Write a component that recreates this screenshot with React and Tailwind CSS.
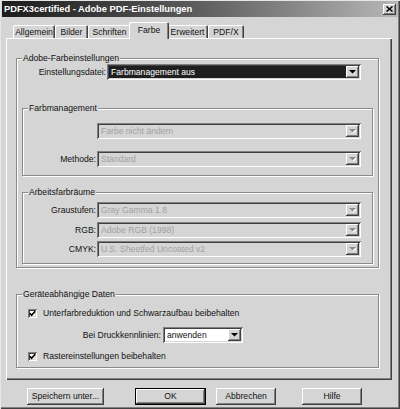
import React from "react";

const raised =
  "shadow-[inset_-1px_-1px_0_#404040,inset_1px_1px_0_#fff,inset_-2px_-2px_0_#808080]";
const sunken =
  "shadow-[inset_1px_1px_0_#808080,inset_-1px_-1px_0_#fff,inset_2px_2px_0_#404040,inset_-2px_-2px_0_#d5d5d5]";

function Tri({ disabled }) {
  return (
    <svg width="7" height="5" viewBox="0 0 7 5">
      {disabled ? (
        <>
          <path d="M1 1 L8 1 L4.5 4.5 Z" fill="#fff" />
          <path d="M0 0 L7 0 L3.5 3.5 Z" fill="#8c8c8c" />
        </>
      ) : (
        <path d="M0 0 L7 0 L3.5 3.5 Z" fill="#000" />
      )}
    </svg>
  );
}

function DropBtn({ disabled }) {
  return (
    <div className={`flex h-[12px] w-[13px] shrink-0 items-center justify-center bg-[#d5d5d5] ${raised}`}>
      <Tri disabled={disabled} />
    </div>
  );
}

function SelectDark({ text }) {
  return (
    <div className={`flex h-[16px] w-[254px] items-center p-[2px] bg-[#d5d5d5] ${sunken}`}>
      <div className="flex h-full flex-1 items-center bg-[#1f1f1f] pl-[2px] text-white">{text}</div>
      <DropBtn />
    </div>
  );
}

function SelectDisabled({ text }) {
  return (
    <div className={`flex h-[16px] w-[264px] items-center p-[2px] bg-[#d5d5d5] ${sunken}`}>
      <div className="flex h-full flex-1 items-center pl-[2px] text-[#a2a2a2]">{text}</div>
      <DropBtn disabled />
    </div>
  );
}

function SelectWhite({ text }) {
  return (
    <div className={`flex h-[16px] w-[80px] items-center p-[2px] bg-white ${sunken}`}>
      <div className="flex h-full flex-1 items-center pl-[2px] text-[#111]">{text}</div>
      <DropBtn />
    </div>
  );
}

function Group({ label, className, children }) {
  return (
    <div
      className={`relative border border-[#8a8a8a] shadow-[1px_1px_0_#fff,inset_1px_1px_0_#fff] ${className}`}
    >
      <div className="absolute left-[5px] top-[-6px] bg-[#d5d5d5] px-[1px] leading-[11px] text-[#111]">
        {label}
      </div>
      {children}
    </div>
  );
}

function Row({ label, labelW, disabled, children, className }) {
  return (
    <div className={`flex items-center ${className}`}>
      <div className={`${labelW} pr-[1px] text-right ${disabled ? "text-[#111]" : "text-[#111]"}`}>{label}</div>
      {children}
    </div>
  );
}

function Check({ label, className }) {
  return (
    <div className={`flex items-center ${className}`}>
      <div className={`ml-[11px] flex h-[9px] w-[9px] items-center justify-center bg-white ${sunken}`}>
        <svg width="7" height="7" viewBox="0 0 7 7">
          <path d="M0.8 3.2 L2.6 5.2 L6.2 1.2" stroke="#000" strokeWidth="1.6" fill="none" />
        </svg>
      </div>
      <div className="ml-[6px] text-[#111]">{label}</div>
    </div>
  );
}

function Button({ children, className, def }) {
  return (
    <div
      className={`flex h-[17px] items-center justify-center bg-[#d5d5d5] text-[#111] ${
        def
          ? "shadow-[inset_0_0_0_1px_#000,inset_-2px_-2px_0_#404040,inset_2px_2px_0_#fff,inset_-3px_-3px_0_#808080]"
          : raised
      } ${className}`}
    >
      {children}
    </div>
  );
}

function Tab({ children, w }) {
  return (
    <div
      className={`flex h-[13px] ${w} items-center justify-center rounded-t-[2px] bg-[#d5d5d5] pt-[1px] shadow-[inset_1px_1px_0_#fff,inset_-1px_0_0_#404040,inset_-2px_0_0_#808080] text-[#111]`}
    >
      {children}
    </div>
  );
}

export default function App() {
  return (
    <div
      className={`relative flex h-[409px] w-[400px] flex-col overflow-hidden bg-[#d5d5d5] pt-[1px] font-['Liberation_Sans',Arial,sans-serif] text-[8.6px] leading-[11px] shadow-[inset_1px_1px_0_#e6e6e6,inset_-1px_-1px_0_#404040,inset_-2px_-2px_0_#808080]`}
    >
      {/* Title bar */}
      <div className="mx-[2px] flex h-[16px] items-center justify-between bg-gradient-to-r from-[#1c1c1c] via-[#5e5e5e] to-[#b8b8b8] pl-[2px] pr-[2px]">
        <div className="text-[9.3px] font-bold text-white">PDFX3certified - Adobe PDF-Einstellungen</div>
        <div className={`flex h-[11px] w-[13px] items-center justify-center bg-[#d5d5d5] ${raised}`}>
          <svg width="7" height="6" viewBox="0 0 7 6">
            <path d="M0.5 0.5 L6.5 5.5 M6.5 0.5 L0.5 5.5" stroke="#000" strokeWidth="1.5" />
          </svg>
        </div>
      </div>

      {/* Tabs */}
      <div className="flex h-[21px] items-end pl-[13px]">
        <Tab w="w-[42px]">Allgemein</Tab>
        <Tab w="w-[33px]">Bilder</Tab>
        <Tab w="w-[43px]">Schriften</Tab>
        <div className="relative z-10 -mx-[2px] mb-[-1px] flex h-[17px] w-[40px] items-start justify-center rounded-t-[2px] bg-[#d5d5d5] pt-[3px] text-[#111] shadow-[inset_1px_1px_0_#fff,inset_-1px_0_0_#404040,inset_-2px_0_0_#808080]">
          Farbe
        </div>
        <Tab w="w-[41px]">Erweitert</Tab>
        <Tab w="w-[36px]">PDF/X</Tab>
      </div>

      {/* Panel */}
      <div className="ml-[6px] flex h-[342px] w-[386px] flex-col pl-[10px] pt-[20px] shadow-[inset_1px_1px_0_#fff,inset_-1px_-1px_0_#404040,inset_-2px_-2px_0_#808080]">
        <Group label="Adobe-Farbeinstellungen" className="flex h-[210px] w-[363px] flex-col pt-[5px]">
          <Row label="Einstellungsdatei:" labelW="w-[90px]">
            <SelectDark text="Farbmanagement aus" />
          </Row>

          <Group label="Farbmanagement" className="ml-[5px] mt-[28px] flex h-[68px] w-[351px] flex-col pt-[14px]">
            <Row label="" labelW="w-[74px]">
              <SelectDisabled text="Farbe nicht ändern" />
            </Row>
            <Row label="Methode:" labelW="w-[74px]" className="mt-[12px]">
              <SelectDisabled text="Standard" />
            </Row>
          </Group>

          <Group label="Arbeitsfarbräume" className="ml-[5px] mt-[16px] flex h-[72px] w-[351px] flex-col pt-[9px]">
            <Row label="Graustufen:" labelW="w-[74px]">
              <SelectDisabled text="Gray Gamma 1.8" />
            </Row>
            <Row label="RGB:" labelW="w-[74px]" className="mt-[4px]">
              <SelectDisabled text="Adobe RGB (1998)" />
            </Row>
            <Row label="CMYK:" labelW="w-[74px]" className="mt-[3px]">
              <SelectDisabled text="U.S. Sheetfed Uncoated v2" />
            </Row>
          </Group>
        </Group>

        <Group label="Geräteabhängige Daten" className="mt-[26px] flex h-[74px] w-[363px] flex-col pt-[14px]">
          <Check label="Unterfarbreduktion und Schwarzaufbau beibehalten" className="h-[9px]" />
          <Row label="Bei Druckkennlinien:" labelW="w-[146px] pr-[2px]" className="mt-[9px]">
            <SelectWhite text="anwenden" />
          </Row>
          <Check label="Rastereinstellungen beibehalten" className="mt-[9px] h-[9px]" />
        </Group>
      </div>

      {/* Buttons */}
      <div className="mt-[8px] flex">
        <Button className="ml-[27px] w-[77px]">Speichern unter...</Button>
        <Button def className="ml-[31px] w-[71px]">OK</Button>
        <Button className="ml-[10px] w-[60px]">Abbrechen</Button>
        <Button className="ml-[26px] w-[60px]">Hilfe</Button>
      </div>
    </div>
  );
}
